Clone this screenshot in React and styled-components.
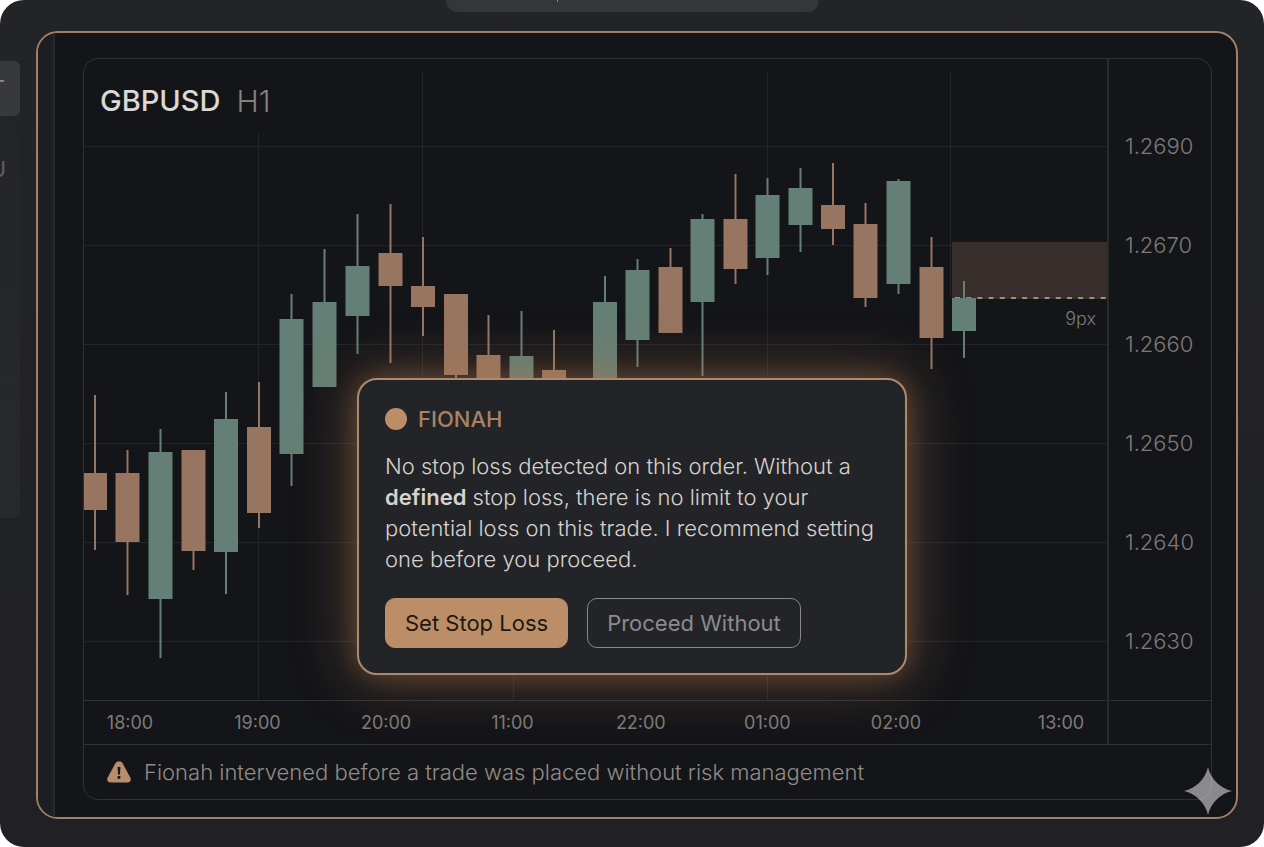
import React from "react";
import styled, { createGlobalStyle } from "styled-components";

const GlobalStyle = createGlobalStyle`
  *, *::before, *::after { box-sizing: border-box; }
  body {
    margin: 0;
    background: #ffffff;
    font-family: Inter, "Liberation Sans", sans-serif;
    color: #7e7b77;
  }
  h1, h2, p { margin: 0; }
`;

const color = {
  line: "#2a2b2f",
  grid: "#232428",
  surface: "#141519",
  bull: "#647f75",
  bear: "#977561",
  copper: "#bb8e68",
  copperLine: "#a18067",
};

const Device = styled.div`
  position: relative;
  display: grid;
  grid-template-columns: 36px minmax(0, 1fr) 26px;
  grid-template-rows: 31px minmax(0, 1fr) 28px;
  min-height: 100vh;
  overflow: hidden;
  border-radius: 24px;
  background: linear-gradient(#232428, #212125);
`;

const TopBar = styled.header`
  grid-column: 1 / -1;
  display: flex;
  justify-content: center;
  align-items: flex-start;
`;

const Pill = styled.div`
  width: 373px;
  height: 12px;
  padding-left: 111px;
  border-radius: 0 0 12px 12px;
  background: #35363a;
`;

const Caret = styled.i`
  display: block;
  width: 1px;
  height: 2px;
  background: #8a8a8c;
`;

const SideNav = styled.nav`
  width: 20px;
  height: 457px;
  margin-top: 30px;
  border-radius: 0 6px 6px 0;
  background: linear-gradient(#232428, #28292d);
`;

const SideTab = styled.div`
  display: flex;
  justify-content: flex-end;
  height: ${(p) => (p.$active ? 55 : 106)}px;
  padding-right: ${(p) => (p.$active ? 15 : 14)}px;
  overflow: hidden;
  border-radius: 0 6px 6px 0;
  font-size: 22px;
  line-height: ${(p) => (p.$active ? 55 : 106)}px;
  color: ${(p) => (p.$active ? "#8d8d90" : "#5d5d60")};
  background: ${(p) => (p.$active ? "#38393d" : "transparent")};
`;

const Frame = styled.main`
  display: grid;
  grid-template-columns: 17px minmax(0, 1fr);
  overflow: hidden;
  border: 2px solid ${color.copperLine};
  border-radius: 22px;
  background: ${color.surface};
`;

const Gutter = styled.div`
  border-right: 2px solid #292a2e;
  background: #1e1f23;
`;

const Stage = styled.div`
  display: grid;
  padding: 25px 24px 17px 28px;
`;

const Panel = styled.section`
  display: grid;
  grid-template-columns: minmax(0, 1fr) 104px;
  grid-template-rows: minmax(640px, 1fr) 44px 55px;
  overflow: hidden;
  border: 1px solid #303135;
  border-radius: 15px;
`;

const Plot = styled.div`
  position: relative;
  display: grid;
`;

const ChartSvg = styled.svg`
  grid-area: 1 / 1;
  display: block;
  width: 100%;
  height: 100%;
`;

const ChartHeader = styled.header`
  grid-area: 1 / 1;
  align-self: start;
  display: flex;
  gap: 16px;
  padding: 24px 16px;
  font-size: 29px;
  line-height: 36px;
`;

const Symbol = styled.h1`
  font-size: 29px;
  font-weight: 500;
  color: #dcd9d4;
`;

const Interval = styled.span`
  font-size: 30px;
  font-weight: 300;
  color: #85827e;
`;

const ZoneLabel = styled.span`
  position: absolute;
  right: 11px;
  top: 250px;
  font-size: 18px;
  font-weight: 350;
  line-height: 20px;
`;

const PriceAxis = styled.div`
  display: flex;
  flex-direction: column;
  padding-top: 38px;
  border-left: 2px solid ${color.line};
`;

const Price = styled.span`
  height: 99px;
  padding-left: 16px;
  font-size: 22px;
  font-weight: 350;
  line-height: 99px;
`;

const TimeAxis = styled.div`
  display: grid;
  grid-template-columns: 812fr 166fr;
  align-items: center;
  padding: 0 22px;
  border-top: 1px solid #303135;
  font-size: 18px;
`;

const Times = styled.div`
  display: flex;
  justify-content: ${(p) => (p.$end ? "flex-end" : "space-between")};
`;

const Time = styled.span`
  width: 48px;
  text-align: center;
`;

const AxisCorner = styled.div`
  border-top: 1px solid #303135;
  border-left: 2px solid ${color.line};
`;

const Notice = styled.footer`
  grid-column: 1 / -1;
  display: flex;
  align-items: center;
  gap: 13px;
  padding: 0 23px;
  border-top: 1px solid #303135;
  font-size: 22px;
  font-weight: 300;
  color: #918c85;
`;

const Dialog = styled.section`
  position: absolute;
  top: 378px;
  left: 50%;
  width: 550px;
  padding: 25px 26px;
  transform: translateX(-50%);
  border: 2px solid #ae8a6c;
  border-radius: 20px;
  background: #232428;
  box-shadow:
    0 0 24px rgba(180, 126, 80, 0.3),
    0 0 56px 6px rgba(180, 126, 80, 0.4);
`;

const DialogHeader = styled.header`
  display: flex;
  align-items: center;
  gap: 11px;
  height: 28px;
`;

const Dot = styled.span`
  width: 22px;
  height: 22px;
  border-radius: 50%;
  background: ${color.copper};
`;

const DialogTitle = styled.h2`
  font-size: 22px;
  font-weight: 500;
  color: #a98266;
`;

const Message = styled.p`
  margin-top: 18px;
  font-size: 22px;
  font-weight: 350;
  line-height: 31px;
  color: #d6d2cd;

  strong { font-weight: 600; }
`;

const Actions = styled.div`
  display: flex;
  gap: 19px;
  margin-top: 23px;
`;

const Button = styled.button`
  height: 50px;
  padding: 0 19px;
  border: 1px solid ${(p) => (p.$primary ? color.copper : "#88888b")};
  border-radius: 10px;
  font: inherit;
  font-size: 22px;
  white-space: nowrap;
  color: ${(p) => (p.$primary ? "#1f1812" : "#8b8b8e")};
  background: ${(p) => (p.$primary ? color.copper : "transparent")};
`;

const Sparkle = styled.svg`
  position: absolute;
  right: 32px;
  bottom: 32px;
  width: 48px;
  height: 48px;
`;

const PRICES = ["1.2690", "1.2670", "1.2660", "1.2650", "1.2640", "1.2630"];
const TIMES = ["18:00", "19:00", "20:00", "11:00", "22:00", "01:00", "02:00"];

const GRID_ROWS = [146, 245, 344, 443, 542, 641];

// x, start, end
const GRID_COLUMNS = [
  [258, 133, 700],
  [422, 73, 380],
  [513, 660, 700],
  [767, 73, 700],
  [950, 73, 298],
];

// x, wick top, body top, body bottom, wick bottom, rising
const CANDLES = [
  [95, 395, 473, 510, 550, false],
  [127.5, 450, 473, 542, 595, false],
  [160.5, 429, 452, 599, 658, true],
  [193.5, 450, 450, 551, 570, false],
  [226, 392, 419, 552, 594, true],
  [259, 382, 427, 513, 528, false],
  [291.5, 294, 319, 454, 486, true],
  [324.5, 249, 302, 387, 387, true],
  [357.5, 214, 266, 316, 354, true],
  [390.5, 204, 253, 286, 363, false],
  [423, 237, 286, 307, 336, false],
  [456, 294, 294, 375, 384, false],
  [488.5, 315, 355, 392, 400, false],
  [521.5, 311, 356, 400, 410, true],
  [554, 330, 370, 405, 412, false],
  [605, 276, 302, 400, 410, true],
  [637.5, 259, 270, 340, 367, true],
  [670.5, 248, 267, 333, 333, false],
  [702.5, 214, 219, 302, 376, true],
  [735.5, 174, 219, 269, 284, false],
  [767.5, 178, 195, 258, 275, true],
  [800.5, 168, 188, 225, 252, true],
  [833, 163, 205, 229, 245, false],
  [865.5, 203, 224, 298, 307, false],
  [898.5, 179, 181, 284, 294, true],
  [931.5, 237, 267, 338, 369, false],
  [964, 281, 298, 331, 358, true],
];

function Candle({ data: [x, high, top, bottom, low, rising] }) {
  const fill = rising ? color.bull : color.bear;
  return (
    <g fill={fill}>
      <rect x={x - 1} y={high} width="2" height={low - high} />
      <rect x={x - 12} y={top} width="24" height={bottom - top} />
    </g>
  );
}

function CandleChart() {
  return (
    <ChartSvg viewBox="84 59 1023 641" preserveAspectRatio="none" role="img" aria-label="GBPUSD candlestick chart">
      <g fill={color.grid}>
        {GRID_ROWS.map((y) => (
          <rect key={y} x="84" y={y} width="1023" height="1" />
        ))}
        {GRID_COLUMNS.map(([x, from, to]) => (
          <rect key={x} x={x} y={from} width="1" height={to - from} />
        ))}
      </g>
      <rect x="952" y="242" width="155" height="57" fill="#382e2c" />
      <path d="M955 298H1107" stroke="#a58e7c" strokeWidth="2" strokeDasharray="5 6.200" />
      {CANDLES.map((c) => (
        <Candle key={c[0]} data={c} />
      ))}
    </ChartSvg>
  );
}

function WarningIcon() {
  return (
    <svg width="24" height="22" viewBox="0 0 24 22" aria-hidden="true">
      <path
        d="M8.300 2.500C10-.5 14-.5 15.700 2.500L23.300 16.600C24.600 19.200 23.200 21.600 20.400 21.600H3.600C.8 21.600-.6 19.200.7 16.600Z"
        fill="#b78d6d"
      />
      <path d="M10.600 6h2.800l-.4 7.500h-2Z" fill="#17171a" />
      <rect x="10.600" y="15" width="2.800" height="2.800" rx=".6" fill="#17171a" />
    </svg>
  );
}

export default function App() {
  return (
    <>
      <GlobalStyle />
      <Device>
        <TopBar>
          <Pill>
            <Caret />
          </Pill>
        </TopBar>
        <SideNav>
          <SideTab $active>T</SideTab>
          <SideTab>U</SideTab>
        </SideNav>
        <Frame>
          <Gutter />
          <Stage>
            <Panel>
              <Plot>
                <CandleChart />
                <ChartHeader>
                  <Symbol>GBPUSD</Symbol>
                  <Interval>H1</Interval>
                </ChartHeader>
                <ZoneLabel>9px</ZoneLabel>
              </Plot>
              <PriceAxis>
                {PRICES.map((p) => (
                  <Price key={p}>{p}</Price>
                ))}
              </PriceAxis>
              <TimeAxis>
                <Times>
                  {TIMES.map((t) => (
                    <Time key={t}>{t}</Time>
                  ))}
                </Times>
                <Times $end>
                  <Time>13:00</Time>
                </Times>
              </TimeAxis>
              <AxisCorner />
              <Notice>
                <WarningIcon />
                <p>Fionah intervened before a trade was placed without risk management</p>
              </Notice>
            </Panel>
          </Stage>
        </Frame>
        <Dialog role="dialog" aria-labelledby="dialog-title">
          <DialogHeader>
            <Dot />
            <DialogTitle id="dialog-title">FIONAH</DialogTitle>
          </DialogHeader>
          <Message>
            No stop loss detected on this order. Without a <strong>defined</strong> stop loss, there is no limit to
            your potential loss on this trade. I recommend setting one before you proceed.
          </Message>
          <Actions>
            <Button type="button" $primary>
              Set Stop Loss
            </Button>
            <Button type="button">Proceed Without</Button>
          </Actions>
        </Dialog>
        <Sparkle viewBox="0 0 48 48" aria-hidden="true">
          <path
            d="M24 0C26.500 11.500 36 21.500 48 24C36 26.500 26.500 36.500 24 48C21.500 36.500 12 26.500 0 24C12 21.500 21.500 11.500 24 0Z"
            fill="#ffffff"
            fillOpacity=".5"
          />
        </Sparkle>
      </Device>
    </>
  );
}
